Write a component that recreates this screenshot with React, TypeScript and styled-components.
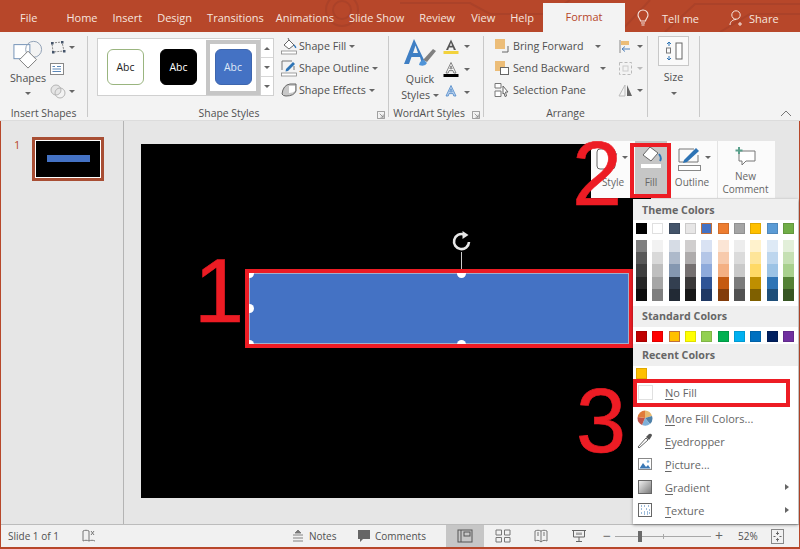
import React from "react";
import styled, { createGlobalStyle } from "styled-components";

const Global = createGlobalStyle`
  html, body { margin: 0; padding: 0; width: 800px; height: 549px; overflow: hidden; background: #b7472a; }
  #root { width: 800px; height: 549px; }
  * { box-sizing: border-box; }
`;

const Window = styled.div`
  position: relative; width: 800px; height: 549px; display: flex; flex-direction: column;
  background: #b7472a; padding: 0 1px 2px 1px; overflow: hidden;
  font-family: "Open Sans", "Liberation Sans", sans-serif; color: #444;
`;
const TabBar = styled.div`
  position: relative; height: 32px; margin: 0 -1px; flex: none; display: flex; align-items: flex-end;
  background: #b7472a; padding-left: 20px; overflow: hidden;
`;
const Circuit = styled.svg`position: absolute; right: 0; top: 0; width: 480px; height: 32px;`;
const Tab = styled.div<{ $gap: number }>`
  position: relative; height: 28px; line-height: 27px; font-size: 11px; color: #f6e5df; margin-right: ${p => p.$gap}px; white-space: nowrap;
`;
const ActiveTab = styled.div`
  position: relative; height: 29px; width: 82px; background: #f3f3f3; color: #b7472a; font-size: 11px;
  line-height: 27px; text-align: center; margin-right: 3px; flex: none;
`;
const TabTool = styled.div`
  position: relative; height: 28px; display: flex; align-items: center; gap: 4px; font-size: 11px; color: #f6e5df;
`;
const Ribbon = styled.div`
  position: relative; height: 89px; flex: none; margin: 0 -1px; background: #f3f3f3; display: flex; padding: 4px 0 3px;
  border-bottom: 1px solid #dcdcdc; color: #444;
`;
const Group = styled.div<{ $w: number }>`
  width: ${p => p.$w}px; flex: none; position: relative; display: flex; flex-direction: column;
  border-right: 1px solid #c9c9c9;
`;
const GroupBody = styled.div<{ $pl?: number }>`flex: 1; display: flex; padding-left: ${p => p.$pl ?? 0}px; min-height: 0;`;
const GroupLabel = styled.div<{ $pr?: number }>`
  height: 12px; line-height: 16px; font-size: 10.4px; text-align: center; color: #505050; white-space: nowrap; padding-right: ${p => p.$pr ?? 0}px;
`;
const Launcher = styled.svg`position: absolute; right: 3px; bottom: -2px; width: 8px; height: 8px;`;
const BigTool = styled.div<{ $w?: number }>`
  width: ${p => p.$w ?? 44}px; display: flex; flex-direction: column; align-items: center; font-size: 10.7px; line-height: 15px; color: #505050; text-align: center;
`;
const Caret = styled.span`
  display: inline-block; width: 0; height: 0; border-left: 3px solid transparent; border-right: 3px solid transparent;
  border-top: 3px solid #666; flex: none;
`;
const ToolColumn = styled.div<{ $w?: number; $pt?: number; $gap?: number }>`
  display: flex; flex-direction: column; gap: ${p => p.$gap ?? 6}px; padding-top: ${p => p.$pt ?? 2}px; ${p => p.$w ? `width: ${p.$w}px;` : ""}
`;
const ToolRow = styled.div<{ $h?: number; $gap?: number }>`
  height: ${p => p.$h ?? 16}px; display: flex; align-items: center; gap: ${p => p.$gap ?? 3}px; font-size: 10.7px; color: #505050; white-space: nowrap;
`;
const CaretSlot = styled.span<{ $ml: number }>`display: inline-flex; margin-left: ${p => p.$ml}px;`;
const Gallery = styled.div`
  width: 177px; height: 58px; border: 1px solid #d0d0d0; background: #fff; display: flex; margin: 2px 6px 0 9px; flex: none;
`;
const GalleryCells = styled.div`flex: 1; display: flex; align-items: center; padding-left: 9px; gap: 16px;`;
const StyleChip = styled.div<{ $bg: string; $fg: string; $bd: string }>`
  width: 37px; height: 36px; border-radius: 6px; background: ${p => p.$bg}; color: ${p => p.$fg};
  border: 1px solid ${p => p.$bd}; font-size: 10.4px; display: flex; align-items: center; justify-content: center; flex: none;
`;
const ChipFrame = styled.div`
  width: 54px; height: 55px; border: 4px solid #c6c6c6; margin-left: -7px; display: flex; align-items: center; justify-content: center; flex: none;
`;
const GalleryScroll = styled.div`width: 14px; border-left: 1px solid #d0d0d0; display: flex; flex-direction: column;`;
const ScrollCell = styled.div`flex: 1; display: flex; align-items: center; justify-content: center; border-bottom: 1px solid #d8d8d8; &:last-child { border-bottom: 0; }`;
const SizeButton = styled.div`
  width: 31px; height: 30px; background: #fafafa; border: 1px solid #c8c8c8; display: flex; align-items: center; justify-content: center;
`;
const SizeTool = styled.div`
  width: 100%; display: flex; flex-direction: column; align-items: center; font-size: 10.7px; color: #505050; gap: 4px;
`;
const Collapse = styled.svg`position: absolute; right: 8px; bottom: 3px; width: 12px; height: 7px;`;

const Workspace = styled.div`flex: 1; display: flex; background: #e6e6e6; min-height: 0; border-bottom: 1px solid #bcbcbc;`;
const Thumbs = styled.div`
  width: 123px; flex: none; border-right: 1px solid #b4b4b4; padding: 16px 0 0 13px; display: flex; align-items: flex-start;
`;
const ThumbNumber = styled.div`width: 18px; font-size: 11px; color: #b7472a; line-height: 14px; padding-top: 1px;`;
const Thumb = styled.div`
  width: 72px; height: 44px; border: 3px solid #a84e34; background: #000; outline: 1px solid #fff; outline-offset: -4px;
  display: flex; align-items: center; justify-content: center;
`;
const ThumbBar = styled.div`width: 43px; height: 7px; background: #4472c4; margin-top: -1px;`;
const Editor = styled.div`flex: 1; padding: 23px 0 0 17px; position: relative; overflow: hidden;`;
const Slide = styled.div`position: relative; width: 510px; height: 354px; background: #000;`;
const Selection = styled.div`
  position: absolute; left: 104px; top: 125px; width: 388px; height: 79px; border: 4px solid #ed1c24; background: #4472c4;
  overflow: hidden; box-shadow: inset 0 0 0 1px #9fb0cc;
`;
const Handle = styled.div<{ $x: string; $y: string }>`
  position: absolute; left: ${p => p.$x}; top: ${p => p.$y}; width: 9px; height: 9px; margin: -4.5px; border-radius: 50%; background: #fff;
`;
const RotateLine = styled.div`position: absolute; left: 320px; top: 108px; width: 1px; height: 19px; background: #ccc;`;
const RotateIcon = styled.svg`position: absolute; left: 309px; top: 87px; width: 24px; height: 21px;`;

const Big = styled.div<{ $x: number; $y: number }>`
  position: absolute; left: ${p => p.$x}px; top: ${p => p.$y}px; font-family: "Liberation Sans", Arial, sans-serif;
  font-size: 90px; line-height: 92px; color: #ed1c24; z-index: 5; -webkit-text-stroke: 0.6px #ed1c24;
`;
const MiniBar = styled.div`
  position: absolute; left: 591px; top: 141px; width: 184px; height: 57px; background: #fbfbfb; display: flex; z-index: 2;
`;
const MiniTool = styled.div<{ $w: number; $on?: boolean }>`
  width: ${p => p.$w}px; flex: none; display: flex; flex-direction: column; align-items: center; padding-top: 6px;
  font-size: 10px; line-height: 12px; color: #666; text-align: center;
  ${p => p.$on ? "background: #c6c6c6;" : ""}
`;
const CommentTool = styled(MiniTool)`border-left: 1px solid #e4e4e4; padding-top: 5px; line-height: 13px;`;
const MiniIcon = styled.div`height: 29px; display: flex; align-items: flex-start; gap: 1px; justify-content: center;`;
const CommentIcon = styled(MiniIcon)`height: 24px;`;
const MiniHighlight = styled.div`
  position: absolute; left: 630px; top: 143px; width: 41px; height: 55px; border: 4px solid #ed1c24; z-index: 3;
`;
const Menu = styled.div`
  position: absolute; left: 633px; top: 199px; width: 165px; height: 325px; background: #fff; z-index: 2;
  box-shadow: 0 1px 3px rgba(0,0,0,.4); display: flex; flex-direction: column;
`;
const MenuHead = styled.div<{ $h: number }>`
  height: ${p => p.$h}px; background: #efefef; font-size: 10.7px; font-weight: 700; color: #666; padding-left: 9px; display: flex; align-items: center; flex: none;
`;
const SwatchRow = styled.div<{ $pt: number; $pb: number }>`
  display: grid; grid-template-columns: repeat(10, 11px); column-gap: 5.33px; padding: ${p => p.$pt}px 0 ${p => p.$pb}px 3px; flex: none;
`;
const Swatch = styled.div<{ $c: string; $active?: boolean }>`
  height: 11px; background: ${p => p.$c}; border: 1px solid ${p => p.$active ? "#c0703a" : "rgba(0,0,0,.12)"};
`;
const TintColumn = styled.div`display: flex; flex-direction: column;`;
const Tint = styled.div<{ $c: string }>`height: 12.2px; background: ${p => p.$c};`;
const NoFillRow = styled.div`
  height: 28px; width: 157px; border: 4px solid #ed1c24; display: flex; align-items: center; font-size: 11px; color: #666; flex: none;
`;
const NoFillBox = styled.div`width: 15px; height: 15px; border: 1px solid #e0e0e0; margin: 0 12px 0 1px;`;
const Underline = styled.span`text-decoration: underline; text-underline-offset: 2px;`;
const MenuItem = styled.div`
  height: 23px; display: flex; align-items: center; padding: 0 9px 0 4px; font-size: 11px; color: #666; flex: none;
`;
const MenuIcon = styled.svg`width: 16px; height: 16px; margin-right: 12px; flex: none;`;
const MenuArrow = styled.span`
  margin-left: auto; width: 0; height: 0; border-top: 3px solid transparent; border-bottom: 3px solid transparent; border-left: 4px solid #666;
`;
const StatusBar = styled.div`
  height: 22px; flex: none; background: #f1f1f1; display: flex; align-items: center; font-size: 10px; color: #505050; padding-left: 7px;
`;
const StatusText = styled.div<{ $w: number; $ml?: number }>`width: ${p => p.$w}px; margin-left: ${p => p.$ml ?? 0}px; white-space: nowrap; flex: none;`;
const StatusIcon = styled.svg<{ $ml?: number }>`width: 16px; height: 14px; flex: none; margin-left: ${p => p.$ml ?? 0}px;`;
const ViewButton = styled.div<{ $on?: boolean }>`
  width: 38px; height: 22px; display: flex; align-items: center; justify-content: center; flex: none;
  ${p => p.$on ? "background: #c6c6c6;" : ""}
`;
const Slider = styled.div`
  position: relative; width: 96px; height: 1px; background: #a8a8a8; margin: 0 1px; flex: none;
`;
const SliderThumb = styled.div`position: absolute; left: 23px; top: -5px; width: 4px; height: 11px; background: #6a6a6a;`;
const SliderTick = styled.div`position: absolute; left: 48px; top: -2px; width: 1px; height: 5px; background: #a8a8a8;`;
const ZoomSign = styled.div<{ $ml?: number }>`width: 14px; margin-left: ${p => p.$ml ?? 0}px; text-align: center; font-size: 14px; line-height: 14px; color: #666; flex: none;`;

const theme = [
  ["#000000", ["#7f7f7f","#595959","#3f3f3f","#262626","#0d0d0d"]],
  ["#ffffff", ["#f2f2f2","#d9d9d9","#bfbfbf","#a6a6a6","#7f7f7f"]],
  ["#44546a", ["#d6dce5","#adb9ca","#8497b0","#333f50","#222a35"]],
  ["#e7e6e6", ["#d0cece","#aeabab","#757070","#3a3838","#171717"]],
  ["#4472c4", ["#d9e2f3","#b4c6e7","#8eaadb","#2f5496","#1f3864"]],
  ["#ed7d31", ["#fbe5d5","#f7caac","#f4b083","#c55a11","#833c0b"]],
  ["#a5a5a5", ["#ededed","#dbdbdb","#c9c9c9","#7b7b7b","#525252"]],
  ["#ffc000", ["#fff2cc","#fee599","#ffd965","#bf8f00","#7f6000"]],
  ["#5b9bd5", ["#deeaf6","#bdd6ee","#9cc3e5","#2e74b5","#1e4e79"]],
  ["#70ad47", ["#e2efd9","#c5e0b3","#a8d08d","#538135","#375623"]],
] as [string, string[]][];
const standard = ["#c00000","#ff0000","#ffc000","#ffff00","#92d050","#00b050","#00b0f0","#0070c0","#002060","#7030a0"];

const tabs: [string, number][] = [["File",29],["Home",15],["Insert",15],["Design",15],["Transitions",12],["Animations",15],["Slide Show",15],["Review",16],["View",15],["Help",9]];

const BucketIcon = () => (
  <svg width="18" height="18" viewBox="0 0 18 18">
    <path d="M4 8 L9 3 L14 8 L9 12 Z" fill="#fff" stroke="#666" strokeWidth="1" />
    <path d="M8 1 L9 3" stroke="#666" />
    <path d="M14 8 Q16 10 15.5 11" stroke="#2e74b5" strokeWidth="1.3" fill="none" />
    <rect x="1.5" y="14" width="15" height="3" fill="#fff" stroke="#888" strokeWidth=".8" />
  </svg>
);
const PencilBox = () => (
  <svg width="18" height="18" viewBox="0 0 18 18">
    <path d="M2 11 V2 H12 M14 7 V11" fill="none" stroke="#777" />
    <path d="M6 10 L13 3 L15 5 L8 12 L5.5 12.5 Z" fill="#2e74b5" />
    <rect x="1.5" y="14" width="15" height="3" fill="#fff" stroke="#888" strokeWidth=".8" />
  </svg>
);
const EffectsIcon = () => (
  <svg width="18" height="16" viewBox="0 0 18 16">
    <path d="M2 12 Q3 3 10 2 H16 V9 Q14 14 6 14 Q3 14 2 12Z" fill="#c8c8c8" stroke="#666" />
    <path d="M9 4 H15 V9 Q13 11 9 11Z" fill="#fff" />
  </svg>
);
const LetterA = ({ bar, outline }: { bar?: string; outline?: boolean }) => (
  <svg width="16" height="17" viewBox="0 0 16 17">
    <path d="M8 1.5 L3 12 H5.2 L6 9.6 H10 L10.8 12 H13 Z M6.8 7.8 L8 4.8 L9.2 7.8 Z" fillRule="evenodd"
      fill={outline ? "#fff" : bar ? "#555" : "#bcd2ee"} stroke={outline ? "#666" : bar ? "none" : "#4a86c8"} strokeWidth=".8" />
    {bar && <rect x="0.5" y="13" width="15" height="3" fill={bar} />}
  </svg>
);
const LauncherIcon = () => (
  <Launcher viewBox="0 0 9 9"><path d="M.5 .5 H8.500 V8.500 H.5 Z M3 3 L7 7 M4 7 H7 V4" fill="none" stroke="#777" strokeWidth=".8" /></Launcher>
);

export default function App() {
  return (
    <Window>
      <Global />
      <TabBar>
        <Circuit viewBox="0 0 480 32">
          <g fill="none" stroke="#ab4229" strokeWidth="2">
            <circle cx="22" cy="10" r="16" /><circle cx="22" cy="10" r="9" />
            <path d="M80 3 H150 L170 14 H230 L250 0 M300 32 L330 0 M345 32 L375 4 H480 M400 32 L430 14 H480" />
          </g>
        </Circuit>
        {tabs.map(([t, g]) => <Tab key={t} $gap={g}>{t}</Tab>)}
        <ActiveTab>Format</ActiveTab>
        <TabTool>
          <svg width="14" height="18" viewBox="0 0 14 18" style={{ marginLeft: 8 }}>
            <path d="M4.5 12 C4 9.5 2 8.5 2 6 A5 5 0 0 1 12 6 C12 8.500 10 9.500 9.500 12 Z M5 14 H9 M5.500 16 H8.500" fill="none" stroke="#f6e5df" strokeWidth="1.1" />
          </svg>
          <span style={{ marginLeft: 8 }}>Tell me</span>
        </TabTool>
        <TabTool style={{ marginLeft: 30 }}>
          <svg width="16" height="18" viewBox="0 0 16 18">
            <circle cx="7" cy="6" r="4.200" fill="none" stroke="#f6e5df" />
            <path d="M1 16 C1 12.500 4 10.500 7 10.500 M11 13 V17 M9 15 H13" fill="none" stroke="#f6e5df" />
          </svg>
          <span>Share</span>
        </TabTool>
      </TabBar>

      <Ribbon>
        <Group $w={88}>
          <GroupBody $pl={6}>
            <BigTool>
              <svg width="30" height="30" viewBox="0 0 32 32" style={{ marginTop: 3 }}>
                <rect x="1" y="6" width="17" height="15" fill="#fff" stroke="#6f8fb5" strokeWidth="1" />
                <circle cx="22" cy="11" r="8.500" fill="none" stroke="#8d9eb3" />
                <path d="M16 13 L25 22 L16 31 L7 22 Z" fill="#fff" stroke="#777" />
              </svg>
              <span style={{ marginTop: 2 }}>Shapes</span>
              <Caret style={{ marginTop: 6 }} />
            </BigTool>
            <ToolColumn $pt={3} $gap={6}>
              <ToolRow>
                <svg width="16" height="14" viewBox="0 0 16 14"><path d="M2 3 L12 2 L14 11 L3 12Z" fill="none" stroke="#888" strokeDasharray="2 1" /><g fill="#44546a"><rect x="1" y="2" width="2.500" height="2.500" /><rect x="11" y="1" width="2.500" height="2.500" /><rect x="13" y="10" width="2.500" height="2.500" /><rect x="2" y="11" width="2.500" height="2.500" /></g></svg>
                <Caret />
              </ToolRow>
              <ToolRow>
                <svg width="14" height="14" viewBox="0 0 14 14"><rect x=".5" y="1.500" width="13" height="11" fill="#fff" stroke="#888" /><path d="M2.500 4.500 H5 M2.500 7 H11 M2.500 9.500 H11 M7 4.500 H11" stroke="#5b87b8" /></svg>
              </ToolRow>
              <ToolRow>
                <svg width="16" height="16" viewBox="0 0 16 16"><circle cx="6" cy="7" r="5" fill="#e5e5e5" stroke="#b5b5b5" /><circle cx="10" cy="10" r="5" fill="none" stroke="#b5b5b5" /></svg>
                <Caret />
              </ToolRow>
            </ToolColumn>
          </GroupBody>
          <GroupLabel>Insert Shapes</GroupLabel>
        </Group>

        <Group $w={301}>
          <GroupBody>
            <Gallery>
              <GalleryCells>
                <StyleChip $bg="#fff" $fg="#222" $bd="#9ab57f">Abc</StyleChip>
                <StyleChip $bg="#000" $fg="#fff" $bd="#000">Abc</StyleChip>
                <ChipFrame><StyleChip $bg="#4472c4" $fg="#dfe8f7" $bd="#3e66ae">Abc</StyleChip></ChipFrame>
              </GalleryCells>
              <GalleryScroll>
                <ScrollCell><Caret style={{ transform: "rotate(180deg)" }} /></ScrollCell>
                <ScrollCell><Caret /></ScrollCell>
                <ScrollCell><Caret /></ScrollCell>
              </GalleryScroll>
            </Gallery>
            <ToolColumn>
              <ToolRow $gap={1}><BucketIcon />Shape Fill<CaretSlot $ml={2}><Caret /></CaretSlot></ToolRow>
              <ToolRow $gap={1}><PencilBox />Shape Outline<CaretSlot $ml={2}><Caret /></CaretSlot></ToolRow>
              <ToolRow $gap={1}><EffectsIcon />Shape Effects<CaretSlot $ml={2}><Caret /></CaretSlot></ToolRow>
            </ToolColumn>
          </GroupBody>
          <GroupLabel $pr={18}>Shape Styles</GroupLabel>
          <LauncherIcon />
        </Group>

        <Group $w={95}>
          <GroupBody $pl={8}>
            <BigTool $w={46}>
              <svg width="36" height="30" viewBox="0 0 36 30" style={{ marginTop: 2 }}>
                <path d="M12 1 L2 26 H7 L9.500 19 H18 L20 26 H24 Z M11 15 L13.500 7.500 L16 15 Z" fillRule="evenodd" fill="#3f7fc4" />
                <path d="M21 22 L31 11 L34 13 L25 24 Z" fill="#808080" />
                <path d="M17 27 Q18 22 22 22 L25 25 Q23 29 17 27Z" fill="#4f94d8" />
              </svg>
              <span style={{ marginTop: 4 }}>Quick</span>
              <span style={{ marginTop: 1 }}>Styles <Caret style={{ verticalAlign: 2 }} /></span>
            </BigTool>
            <ToolColumn $pt={1} $gap={5}>
              <ToolRow $h={18}><LetterA bar="#f2d23c" /><Caret style={{ marginLeft: 2 }} /></ToolRow>
              <ToolRow $h={18}><LetterA bar="#000" outline /><Caret style={{ marginLeft: 2 }} /></ToolRow>
              <ToolRow $h={18}><LetterA /><Caret style={{ marginLeft: 2 }} /></ToolRow>
            </ToolColumn>
          </GroupBody>
          <GroupLabel $pr={14}>WordArt Styles</GroupLabel>
          <LauncherIcon />
        </Group>

        <Group $w={164}>
          <GroupBody $pl={10}>
            <ToolColumn $w={124}>
              <ToolRow><svg width="16" height="16" viewBox="0 0 16 16"><rect x="1" y="1" width="10" height="10" fill="#ecbd78" /><path d="M14 8 V14 H8" fill="none" stroke="#666" /></svg>Bring Forward<CaretSlot $ml={8}><Caret /></CaretSlot></ToolRow>
              <ToolRow><svg width="16" height="16" viewBox="0 0 16 16"><rect x="1" y="1" width="10" height="10" fill="#ecbd78" /><rect x="6.500" y="7.500" width="8" height="7" fill="#fff" stroke="#666" /></svg>Send Backward<CaretSlot $ml={8}><Caret /></CaretSlot></ToolRow>
              <ToolRow><svg width="16" height="16" viewBox="0 0 16 16"><path d="M1 1.500 H7 V6 H1Z M1 9 H7 V14.500 H1Z" fill="#fff" stroke="#777" /><path d="M9 4 L14 10 H11.500 L12.500 14 L11 14.500 L10 11 L9 12Z" fill="#fff" stroke="#666" /></svg>Selection Pane</ToolRow>
            </ToolColumn>
            <ToolColumn>
              <ToolRow><svg width="14" height="15" viewBox="0 0 14 15"><path d="M2 1 V14" stroke="#888" /><rect x="3" y="2" width="8" height="4" fill="#ecbd78" /><path d="M12 10 H4 M7 7.500 L4 10 L7 12.500" fill="none" stroke="#4f81bd" /></svg><CaretSlot $ml={2}><Caret /></CaretSlot></ToolRow>
              <ToolRow><svg width="15" height="15" viewBox="0 0 15 15"><rect x="1.500" y="1.500" width="12" height="12" fill="none" stroke="#bbb" strokeDasharray="3 2" /><rect x="5" y="5" width="5" height="5" fill="none" stroke="#ccc" /></svg><CaretSlot $ml={1}><Caret style={{ opacity: .4 }} /></CaretSlot></ToolRow>
              <ToolRow><svg width="15" height="14" viewBox="0 0 15 14"><path d="M7 2 V13 H1Z" fill="none" stroke="#bbb" /><path d="M9 2 L14 13 H9Z" fill="#666" /></svg><CaretSlot $ml={1}><Caret /></CaretSlot></ToolRow>
            </ToolColumn>
          </GroupBody>
          <GroupLabel>Arrange</GroupLabel>
        </Group>

        <Group $w={52}>
          <GroupBody>
            <SizeTool>
              <SizeButton>
                <svg width="22" height="22" viewBox="0 0 22 22">
                  <rect x="13" y="3" width="6" height="16" fill="#fff" stroke="#666" />
                  <path d="M6 2 V6 M4 4 L6 2 L8 4 M6 20 V16 M4 18 L6 20 L8 18" fill="none" stroke="#2e74b5" />
                  <rect x="3.500" y="8" width="4" height="5" fill="none" stroke="#777" />
                </svg>
              </SizeButton>
              <span>Size</span>
              <Caret style={{ marginTop: 4 }} />
            </SizeTool>
          </GroupBody>
        </Group>
        <Collapse viewBox="0 0 12 7"><path d="M1 6 L6 1 L11 6" fill="none" stroke="#777" /></Collapse>
      </Ribbon>

      <Workspace>
        <Thumbs>
          <ThumbNumber>1</ThumbNumber>
          <Thumb><ThumbBar /></Thumb>
        </Thumbs>
        <Editor>
          <Slide>
            <RotateIcon viewBox="0 0 24 21">
              <path d="M19 11 A7.500 7.500 0 1 1 14 3.500" fill="none" stroke="#e8e8e8" strokeWidth="2.600" />
              <path d="M12.500 0 L18.500 4 L12.500 8 Z" fill="#e8e8e8" />
            </RotateIcon>
            <RotateLine />
            <Selection>
              <Handle $x="0" $y="0" />
              <Handle $x="0" $y="50%" />
              <Handle $x="0" $y="100%" />
              <Handle $x="56%" $y="0" />
              <Handle $x="56%" $y="100%" />
            </Selection>
          </Slide>
        </Editor>
      </Workspace>

      <StatusBar>
        <StatusText $w={73}>Slide 1 of 1</StatusText>
        <StatusIcon viewBox="0 0 16 14">
          <path d="M8 2 C6 1 4 1 2 2 V12 C4 11 6 11 8 12 C10 11 12 11 14 12" fill="none" stroke="#777" />
          <path d="M8 2 V12 M10 2 L13 6 M13 2 L10 6" fill="none" stroke="#777" />
        </StatusIcon>
        <StatusIcon viewBox="0 0 16 14" $ml={193}>
          <path d="M8 1 L5 4 H11 Z M3 6 H13 M3 9 H13 M3 12 H13" fill="#777" stroke="#777" strokeWidth=".9" />
        </StatusIcon>
        <StatusText $w={47} $ml={3}>Notes</StatusText>
        <StatusIcon viewBox="0 0 16 14">
          <path d="M2 1 H14 V10 H7 L4 13 V10 H2 Z" fill="#666" />
        </StatusIcon>
        <StatusText $w={71} $ml={3}>Comments</StatusText>
        <ViewButton $on>
          <svg width="16" height="14" viewBox="0 0 16 14"><rect x="1" y="1" width="14" height="12" fill="none" stroke="#555" /><path d="M4 1 V13" stroke="#555" /><rect x="7" y="3" width="6" height="4" fill="none" stroke="#555" /></svg>
        </ViewButton>
        <ViewButton>
          <svg width="16" height="14" viewBox="0 0 16 14"><path d="M1 1 H6.500 V6 H1Z M9.500 1 H15 V6 H9.500Z M1 8.500 H6.500 V13 H1Z M9.500 8.500 H15 V13 H9.500Z" fill="none" stroke="#777" /></svg>
        </ViewButton>
        <ViewButton>
          <svg width="16" height="14" viewBox="0 0 16 14"><path d="M8 2 C6 1 4 1 2 2 V12 C4 11 6 11 8 13 C10 11 12 11 14 12 V2 C12 1 10 1 8 2Z M8 2 V13 M4 4 H6 M4 6 H6 M10 4 H12 M10 6 H12" fill="none" stroke="#777" /></svg>
        </ViewButton>
        <ViewButton>
          <svg width="16" height="14" viewBox="0 0 16 14"><path d="M1 1.500 H15 M2.500 1.500 V8 H13.500 V1.500 M8 8 V12 M5 12.500 H11" fill="none" stroke="#666" /><rect x="5" y="3.500" width="6" height="2.500" fill="#aaa" /></svg>
        </ViewButton>
        <ZoomSign $ml={2}>−</ZoomSign>
        <Slider><SliderTick /><SliderThumb /></Slider>
        <ZoomSign>+</ZoomSign>
        <StatusText $w={33} $ml={12}>52%</StatusText>
        <svg width="13" height="15" viewBox="0 0 13 15"><rect x=".5" y=".5" width="12" height="14" fill="none" stroke="#888" /><path d="M6.500 2.500 V5.500 M5 4 L6.500 5.500 L8 4 M6.500 12.500 V9.500 M5 11 L6.500 9.500 L8 11 M2.500 7.500 H4.500 M8.500 7.500 H10.500" fill="none" stroke="#666" /></svg>
      </StatusBar>

      <Big $x={194} $y={245}>1</Big>
      <Big $x={572} $y={128}>2</Big>
      <Big $x={576} $y={375}>3</Big>

      <MiniBar>
        <MiniTool $w={44}>
          <MiniIcon>
            <svg width="30" height="26" viewBox="0 0 30 26" style={{ marginLeft: -8 }}>
              <rect x="6" y="2" width="18" height="20" rx="3" fill="#fff" stroke="#666" />
              <path d="M18 17 L25 6" stroke="#777" strokeWidth="3" />
            </svg>
            <Caret style={{ marginTop: 9 }} />
          </MiniIcon>
          Style
        </MiniTool>
        <MiniTool $w={32} $on>
          <MiniIcon>
            <svg width="24" height="24" viewBox="0 0 24 24" style={{ marginTop: -2 }}>
              <path d="M4 10 L11 2 L19 8 L12 16 Z" fill="#fff" stroke="#666" />
              <path d="M20 9 Q23 13 21 16" stroke="#2e74b5" strokeWidth="2" fill="none" />
              <rect x="2" y="19" width="20" height="4" fill="#fff" />
            </svg>
          </MiniIcon>
          Fill
        </MiniTool>
        <MiniTool $w={50}>
          <MiniIcon>
            <svg width="30" height="27" viewBox="0 0 30 27" style={{ marginTop: -2 }}>
              <path d="M5 17 V4 H20 M24 10 V17 H5" fill="none" stroke="#777" />
              <path d="M10 15 L22 3 L25 6 L13 17 L9 18 Z" fill="#2e74b5" />
              <rect x="4.500" y="20.500" width="22" height="5" fill="#fff" stroke="#888" />
            </svg>
            <Caret style={{ marginTop: 9 }} />
          </MiniIcon>
          Outline
        </MiniTool>
        <CommentTool $w={56}>
          <CommentIcon>
            <svg width="24" height="22" viewBox="0 0 24 22">
              <path d="M5 5 H21 V15 H12 L8 19 V15 H5 Z" fill="#fff" stroke="#777" />
              <path d="M5 1 V8 M1.500 4.500 H8.500" stroke="#5aa08c" strokeWidth="2" />
            </svg>
          </CommentIcon>
          New<br />Comment
        </CommentTool>
      </MiniBar>
      <MiniHighlight />

      <Menu>
        <MenuHead $h={21}>Theme Colors</MenuHead>
        <SwatchRow $pt={3} $pb={6}>
          {theme.map(([c], i) => <Swatch key={c} $c={c} $active={i === 4} />)}
        </SwatchRow>
        <SwatchRow $pt={0} $pb={5}>
          {theme.map(([c, t]) => (
            <TintColumn key={c}>{t.map(x => <Tint key={x} $c={x} />)}</TintColumn>
          ))}
        </SwatchRow>
        <MenuHead $h={21}>Standard Colors</MenuHead>
        <SwatchRow $pt={4} $pb={2}>
          {standard.map((c, i) => <Swatch key={c} $c={c} $active={i === 2} />)}
        </SwatchRow>
        <MenuHead $h={22}>Recent Colors</MenuHead>
        <SwatchRow $pt={2} $pb={0}><Swatch $c="#ffc000" /></SwatchRow>
        <NoFillRow><NoFillBox /><span><Underline>N</Underline>o Fill</span></NoFillRow>
        <MenuItem>
          <MenuIcon viewBox="0 0 16 16">
            <path d="M8 8 L8 .5 A7.500 7.500 0 0 1 15 6Z" fill="#e8b96f" />
            <path d="M8 8 L15 6 A7.500 7.500 0 0 1 13 14Z" fill="#4f81a8" />
            <path d="M8 8 L13 14 A7.500 7.500 0 0 1 5 15Z" fill="#7fb0d8" />
            <path d="M8 8 L5 15 A7.500 7.500 0 0 1 .7 7Z" fill="#c0544a" />
            <path d="M8 8 L.7 7 A7.500 7.500 0 0 1 8 .5Z" fill="#e07b3a" />
          </MenuIcon>
          <span><Underline>M</Underline>ore Fill Colors...</span>
        </MenuItem>
        <MenuItem>
          <MenuIcon viewBox="0 0 16 16">
            <path d="M2 15 L1 14 L9 5 L11 7 Z" fill="#fff" stroke="#666" />
            <path d="M9 4 L12 1 Q14 0 15 2 Q15 3 12 7 Z" fill="#555" />
          </MenuIcon>
          <span><Underline>E</Underline>yedropper</span>
        </MenuItem>
        <MenuItem>
          <MenuIcon viewBox="0 0 16 16">
            <rect x="1.500" y="2.500" width="13" height="11" fill="#fff" stroke="#888" />
            <path d="M2.500 12.500 L6 7 L9 11 L11 9 L13.500 12.500Z" fill="#3a78b5" />
            <circle cx="11" cy="5.500" r="1.300" fill="#7fb0d8" />
          </MenuIcon>
          <span><Underline>P</Underline>icture...</span>
        </MenuItem>
        <MenuItem>
          <MenuIcon viewBox="0 0 16 16">
            <defs><linearGradient id="grad" x1="0" y1="0" x2="1" y2="1"><stop offset="0" stopColor="#f4f4f4" /><stop offset="1" stopColor="#777" /></linearGradient></defs>
            <rect x="1.500" y="1.500" width="13" height="13" fill="url(#grad)" stroke="#666" />
          </MenuIcon>
          <span><Underline>G</Underline>radient</span>
          <MenuArrow />
        </MenuItem>
        <MenuItem>
          <MenuIcon viewBox="0 0 16 16">
            <rect x="1.500" y="1.500" width="13" height="13" fill="#fff" stroke="#666" />
            <path d="M4 4 H5 M7 4 H8 M11 4 H12 M4 7 H5 M9 7 H10 M12 8 H13 M4 11 H5 M7 10 H8 M7 12 H8 M10 10 H11 M10 12 H11 M12 11 H13" stroke="#3a78b5" strokeWidth="1.200" />
          </MenuIcon>
          <span><Underline>T</Underline>exture</span>
          <MenuArrow />
        </MenuItem>
      </Menu>
    </Window>
  );
}
